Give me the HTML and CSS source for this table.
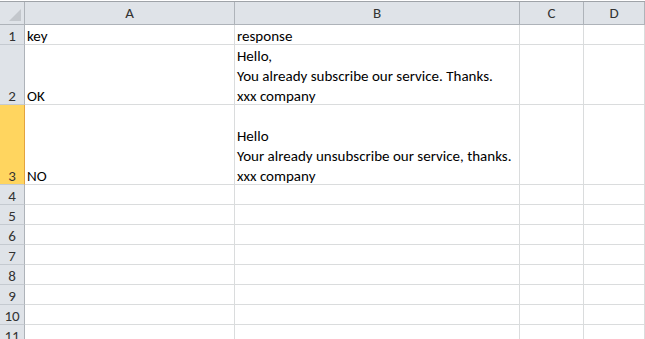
FILE: index.html
```html
<!DOCTYPE html>
<html lang="en">
<head>
    <meta charset="UTF-8">
    <title>Sheet1</title>
    <link rel="stylesheet" href="styles.css">
</head>
<body>
    <div class="sheet">
        <!-- column headers -->
        <div class="corner"><span class="select-all"></span></div>
        <div class="col-head">A</div>
        <div class="col-head">B</div>
        <div class="col-head">C</div>
        <div class="col-head">D</div>

        <div class="row-head"><span>1</span></div>
        <div class="cell"><div class="text">key</div></div>
        <div class="cell"><div class="text">response</div></div>
        <div class="cell"></div>
        <div class="cell"></div>

        <div class="row-head"><span>2</span></div>
        <div class="cell"><div class="text">OK</div></div>
        <div class="cell"><div class="text">Hello,<br>You already subscribe our service. Thanks.<br>xxx company</div></div>
        <div class="cell"></div>
        <div class="cell"></div>

        <div class="row-head active"><span>3</span></div>
        <div class="cell"><div class="text">NO</div></div>
        <div class="cell"><div class="text"><br>Hello<br>Your already unsubscribe our service, thanks.<br>xxx company</div></div>
        <div class="cell"></div>
        <div class="cell"></div>

        <div class="row-head"><span>4</span></div>
        <div class="cell"></div><div class="cell"></div><div class="cell"></div><div class="cell"></div>
        <div class="row-head"><span>5</span></div>
        <div class="cell"></div><div class="cell"></div><div class="cell"></div><div class="cell"></div>
        <div class="row-head"><span>6</span></div>
        <div class="cell"></div><div class="cell"></div><div class="cell"></div><div class="cell"></div>
        <div class="row-head"><span>7</span></div>
        <div class="cell"></div><div class="cell"></div><div class="cell"></div><div class="cell"></div>
        <div class="row-head"><span>8</span></div>
        <div class="cell"></div><div class="cell"></div><div class="cell"></div><div class="cell"></div>
        <div class="row-head"><span>9</span></div>
        <div class="cell"></div><div class="cell"></div><div class="cell"></div><div class="cell"></div>
        <div class="row-head"><span>10</span></div>
        <div class="cell"></div><div class="cell"></div><div class="cell"></div><div class="cell"></div>
        <div class="row-head"><span>11</span></div>
        <div class="cell"></div><div class="cell"></div><div class="cell"></div><div class="cell"></div>
    </div>
</body>
</html>
```

FILE: styles.css
```css
body, html {
    margin: 0;
    padding: 0;
    height: 100%;
    overflow: hidden;
    background-color: #fff;
    font-family: 'Carlito', 'Liberation Sans', Arial, sans-serif;
    font-size: 15px;
    color: #000;
}
.sheet {
    margin-top: 1px;
    border-top: 1px solid #9fa3a8;
    display: grid;
    grid-template-columns: 25px 210px 285px 64px 1fr;
    /* header, then rows 1-3 (row 2 and 3 hold wrapped text) */
    grid-template-rows: 23px 20px 60px 80px;
    grid-auto-rows: 20px;
}
.sheet > div {
    box-sizing: border-box;
}
.corner {
    background-color: #dfe3e8;
    border-right: 1px solid #aeb3b9;
    border-bottom: 1px solid #aeb3b9;
    display: flex;
    justify-content: flex-end;
    align-items: flex-end;
    padding: 0 3px 3px 0;
}
.select-all {
    width: 0;
    height: 0;
    border-left: 12px solid transparent;
    border-bottom: 12px solid #c3c7cc;
}
.col-head {
    background-color: #dfe3e8;
    border-right: 1px solid #aeb3b9;
    border-bottom: 1px solid #aeb3b9;
    display: flex;
    align-items: center;
    justify-content: center;
    color: #333;
}
.row-head {
    background-color: #dfe3e8;
    border-right: 1px solid #aeb3b9;
    border-bottom: 1px solid #c5cad0;
    display: flex;
    flex-direction: column;
    justify-content: flex-end;
    align-items: center;
    line-height: 20px;
    color: #333;
}
.row-head span {
    margin-bottom: -2px;
}
.row-head.active {
    background-color: #ffd55f;
    border-right-color: #e3a33e;
}
.cell {
    border-right: 1px solid #dadcdd;
    border-bottom: 1px solid #dadcdd;
    display: flex;
    flex-direction: column;
    justify-content: flex-end;
    padding-left: 2px;
    line-height: 20px;
    white-space: nowrap;
}
.cell .text {
    margin-bottom: -2px;
}
```
